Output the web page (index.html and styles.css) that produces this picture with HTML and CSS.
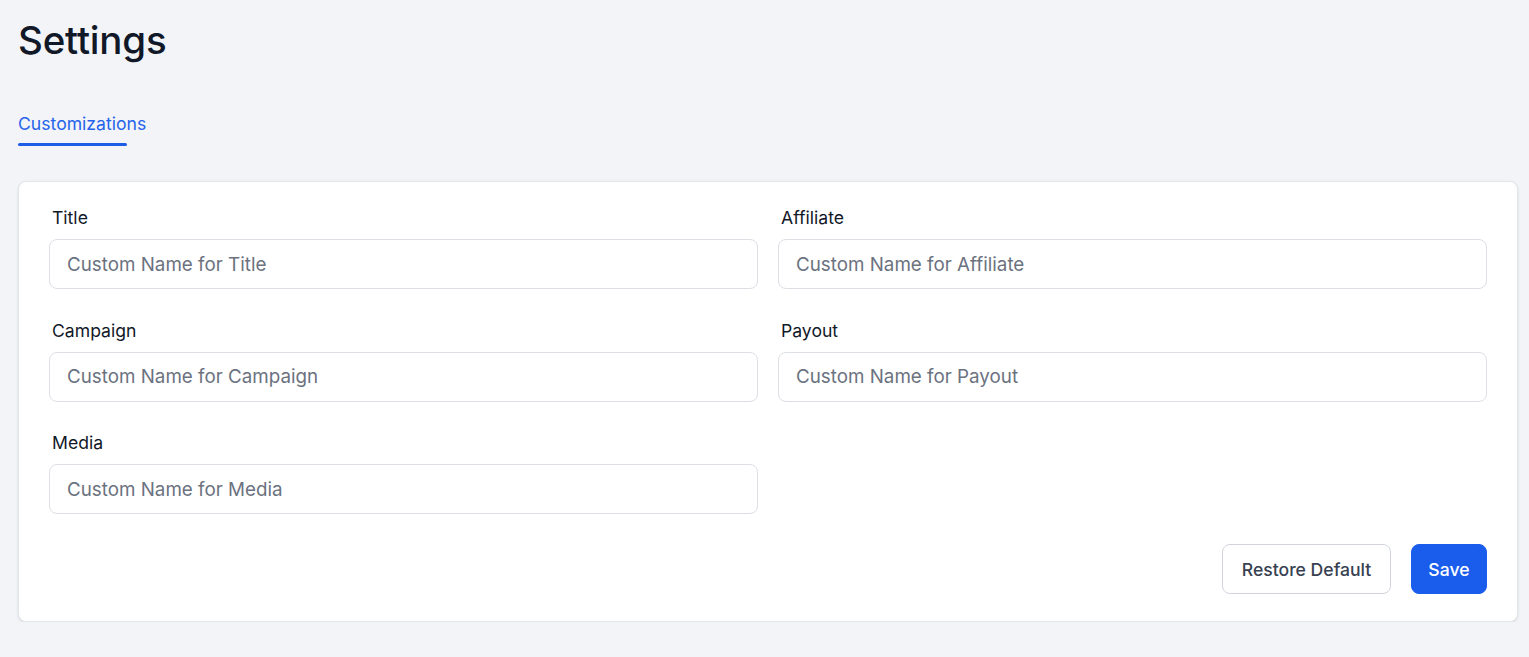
FILE: index.html
```html
<!DOCTYPE html>
<html lang="en">
<head>
    <meta charset="UTF-8">
    <title>Settings</title>
    <link rel="stylesheet" href="styles.css">
</head>
<body>
<div class="page">
    <h1 class="page-title">Settings</h1>
    <div class="tabs">
        <a class="tab active">Customizations</a>
    </div>
    <form class="card">
        <div class="grid">
            <div class="field">
                <label>Title</label>
                <input type="text" placeholder="Custom Name for Title">
            </div>
            <div class="field">
                <label>Affiliate</label>
                <input type="text" placeholder="Custom Name for Affiliate">
            </div>
            <div class="field">
                <label>Campaign</label>
                <input type="text" placeholder="Custom Name for Campaign">
            </div>
            <div class="field">
                <label>Payout</label>
                <input type="text" placeholder="Custom Name for Payout">
            </div>
            <div class="field">
                <label>Media</label>
                <input type="text" placeholder="Custom Name for Media">
            </div>
        </div>
        <div class="actions">
            <button type="button" class="btn btn-light">Restore Default</button>
            <button type="button" class="btn btn-primary">Save</button>
        </div>
    </form>
</div>
</body>
</html>
```

FILE: styles.css
```css
* {
    margin: 0;
    padding: 0;
    box-sizing: border-box;
}
html,body {
    background: #f3f4f8;
    font-family: Inter, "Noto Sans", sans-serif;
    color: #111827;
}
.page {
    padding: 16px 11px 0 18px;
}
.page-title {
    font-size: 38.5px;
    font-weight: 500;
    line-height: 48px;
    letter-spacing: -0.2px;
}
.tabs {
    margin-top: 47px;
    display: flex;
}
.tab {
    font-size: 17.6px;
    line-height: 26px;
    color: #2563eb;
}
/* underline is a bit shorter than the label */
.tab.active::after {
    content: "";
    display: block;
    width: 109px;
    height: 3px;
    background: #1d5ce6;
    border-radius: 2px;
    margin-top: 6px;
}
.card {
    margin-top: 35px;
    background: #fff;
    border: 1px solid #e3e5ea;
    border-radius: 8px;
    box-shadow: 0 1px 3px rgba(16, 24, 40, 0.1);
    padding: 23px 30px 27px 30px;
}
.grid {
    display: grid;
    grid-template-columns: 1fr 1fr;
    column-gap: 20px;
    row-gap: 28.5px;
}
.field label {
    display: block;
    font-size: 17.6px;
    line-height: 25px;
    color: #111827;
    padding-left: 3px;
    margin-bottom: 9px;
}
.field input {
    display: block;
    width: 100%;
    height: 50px;
    border: 1px solid #dcdfe4;
    border-radius: 8px;
    padding: 0 17px;
    font-family: inherit;
    font-size: 18.8px;
    color: #111827;
    outline: none;
}
.field input::placeholder {
    color: #6b7280;
}
.actions {
    margin-top: 30px;
    display: flex;
    justify-content: flex-end;
    gap: 20px;
}
.btn {
    height: 50px;
    border-radius: 8px;
    font-family: inherit;
    font-size: 17.6px;
    font-weight: 500;
    cursor: pointer;
}
.btn-light {
    padding: 0 18.5px;
    background: #fff;
    border: 1px solid #d1d5db;
    color: #374151;
}
.btn-primary {
    padding: 0 16.5px;
    background: #1a5ded;
    border: 1px solid #1a5ded;
    color: #fff;
}
```
